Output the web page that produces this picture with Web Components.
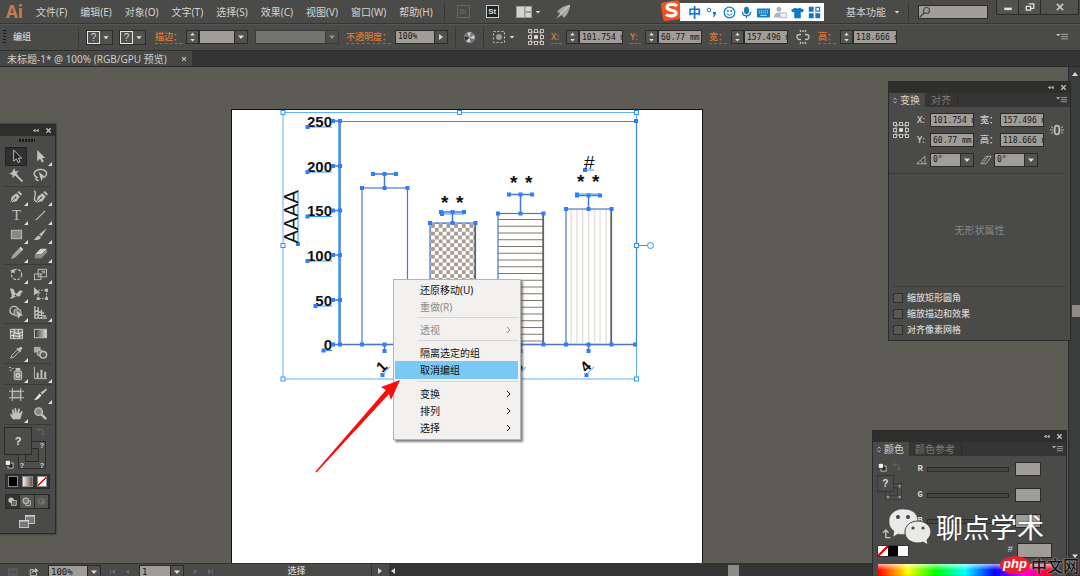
<!DOCTYPE html>
<html lang="zh-CN">
<head>
<meta charset="utf-8">
<title>未标题-1* @ 100%</title>
<style>
html,body{margin:0;height:100%}
body{overflow:hidden;font:10px/14px "Noto Sans","Noto Sans CJK SC",sans-serif;color:#d6d3ce;background:#5c5b54;
--bar:#4a4a48;--dark:#333434;--edge:#2b2b2a;--field:#a09c97;--light:#c4c1bc;--blue:#2f7dfb;--mono:"DejaVu Sans Mono","Noto Sans CJK SC",monospace}
</style>
</head>
<body>
<ai-app></ai-app>
<script>
const base=`*{box-sizing:border-box}button,input,select{font:inherit;color:inherit;margin:0;padding:0;border:0;border-radius:0;background:none;outline:0}svg{display:block}a{color:inherit;text-decoration:none}`;
const def=(tag,css,html)=>customElements.define(tag,class extends HTMLElement{
  connectedCallback(){
    if(this.shadowRoot)return;
    this.attachShadow({mode:'open'}).innerHTML=`<style>${base}${css}</style>`+(typeof html==='function'?html(this):html);
  }
});

const L='#c4c1bc';
const nib=`<path d="M1.5 14.5L3 8L8 4.5L11.5 8L8 13Z" fill="${L}"/><path d="M9 3.5L10.5 2L14 5.5L12.5 7Z" fill="${L}"/><path d="M1.5 14.5L7 9" stroke="#4a4a48"/><circle cx="7" cy="9" r="1" fill="#4a4a48"/>`;
const icons={
select:`<path d="M5 1V13L8 10.500L9.800 14.500L11.800 13.600L10 9.800H13.500Z" fill="#222" stroke="${L}"/>`,
direct:`<path d="M4.500 1V13L7.500 10.500L9.500 14.500L11.500 13.500L9.700 9.700H13Z" fill="${L}"/>`,
wand:`<path d="M7 7L14.500 14.500" stroke="${L}" stroke-width="2"/><path d="M5.500 0L6.800 3.600L10.500 3L8 5.700L10 9L6.200 8L4 11L3.700 7.200L0 6L3.500 4.600Z" fill="${L}"/>`,
lasso:`<path d="M5 10C1 9 0 5 3 3C6 1 12 1 14 4C15 6 14 8 13 9M5 10C2 10 3 14 6 13" fill="none" stroke="${L}" stroke-width="1.500"/><path d="M6 4L14 10L10.500 10.500L9 14Z" fill="${L}"/>`,
pen:nib,
curve:`<path d="M1 2C5 4 0 9 2 12C3 14 5 14 6 13" fill="none" stroke="${L}" stroke-width="1.500"/><g transform="translate(2 0)">${nib}</g>`,
type:`<text x="8" y="13" text-anchor="middle" font-family="Liberation Serif,serif" font-size="15" fill="${L}">T</text>`,
line:`<path d="M3 13L13 3" stroke="${L}" stroke-width="1.200"/>`,
rect:`<rect x="2.500" y="3.500" width="11" height="9" fill="#8b8985" stroke="${L}"/>`,
brush:`<path d="M15 1L9 10L6.500 8Z" fill="${L}"/><path d="M6 9L8.500 11C7 14 4 14 0 14C3 13 3 10 6 9Z" fill="${L}"/>`,
pencil:`<path d="M2 14L4 9.500L11 2L14 5L7 12Z" fill="#aaa7a2"/><path d="M11 2L12.500 .8L15 3.500L14 5Z" fill="#e6e3de"/>`,
eraser:`<path d="M2 9L8 3H15L9 9Z" fill="#d4d1cc"/><path d="M2 9H9V13H2ZM9 9L15 3V7L9 13Z" fill="#8d8a86"/>`,
rotate:`<circle cx="8" cy="8" r="5.500" fill="none" stroke="${L}" stroke-width="1.300" stroke-dasharray="3 1.500"/><path d="M1 4L6 2V7Z" fill="${L}"/>`,
scale:`<rect x="1.500" y="7.500" width="7" height="6" fill="none" stroke="${L}"/><rect x="5.500" y="2.500" width="9" height="8" fill="none" stroke="${L}"/><path d="M7 9L12 5M9 4.500H12.500V7" fill="none" stroke="${L}"/>`,
width:`<path d="M1 3C7 1 5 9 8 8C11 7 10 3 15 6C11 7 14 12 9 11C6 10 4 15 1 13C5 12 2 7 1 3Z" fill="${L}"/><circle cx="7" cy="10" r="1" fill="#444"/>`,
free:`<path d="M1 1V10L3.500 8L8 8Z" fill="${L}"/><rect x="5.500" y="4.500" width="9" height="9" fill="none" stroke="${L}" stroke-dasharray="2 1"/><path d="M4 12h3v3h-3zM13 12h3v3h-3zM13 3h3v3h-3z" fill="${L}"/>`,
builder:`<circle cx="5.500" cy="6" r="4.500" fill="none" stroke="${L}" stroke-width="1.500"/><circle cx="9" cy="8" r="4" fill="#777" stroke="${L}"/><path d="M8 6L15 11L11.500 12L10 15Z" fill="${L}"/>`,
persp:`<path d="M2 1V14H15M5.500 2V14M9 5V14M2 6L12 9M2 10L14 12" fill="none" stroke="${L}" stroke-width="1.500"/>`,
mesh:`<rect x="1.500" y="3.500" width="13" height="10" fill="#777" stroke="${L}"/><path d="M1 7C5 3 6 12 15 6M1 11C5 8 10 14 15 9M5 3C9 7 2 9 6 14M11 3C7 8 14 9 10 14" fill="none" stroke="#eee"/>`,
grad:`<defs><linearGradient id="g"><stop stop-color="#333"/><stop offset="1" stop-color="#ddd"/></linearGradient></defs><rect x="1.500" y="3.500" width="13" height="9" fill="url(#g)" stroke="${L}"/>`,
drop:`<path d="M2 14L3 11L9 5L11 7L5 13Z" fill="none" stroke="${L}"/><path d="M8 4L12 8L13 7L12 6L14.500 3.500L12.500 1.500L10 4L9 3Z" fill="${L}"/>`,
blend:`<rect x="1" y="2" width="7" height="6" fill="#aaa"/><rect x="4.500" y="5.500" width="6" height="6" rx="2" fill="#777" stroke="${L}"/><circle cx="11" cy="10.500" r="3.500" fill="#5b5b59" stroke="${L}" stroke-width="1.500"/>`,
spray:`<rect x="5.500" y="5.500" width="8" height="9" rx="1" fill="#888" stroke="${L}"/><path d="M7 2h5v3h-5zM0 1h2v1h-2zM3 2h2v1h-2zM1 4h2v1h-2z" fill="${L}"/><circle cx="9.500" cy="10" r="2" fill="none" stroke="#eee"/>`,
graph:`<path d="M1.500 1V13.500H15" fill="none" stroke="${L}"/><path d="M4 7h2v6h-2zM8 4h2v9h-2zM12 6h2v7h-2z" fill="${L}"/>`,
artboard:`<rect x="3.500" y="4.500" width="9" height="7" fill="#666" stroke="${L}"/><path d="M0 4.500H16M0 11.500H16M3.500 1V15M12.500 1V15" stroke="${L}"/>`,
slice:`<path d="M1 14L7 7L9 9L5 13Z" fill="#eee"/><path d="M8 6L14 1.500L15 3L10 8Z" fill="${L}"/>`,
hand:`<path d="M4 14L1 9L2 8L4 10L3 4L4.500 3.500L6 8L6 2L7.500 2L8.500 8L10 2.500L11.500 3L11 8.500L13.500 5L14.500 6L12 14Z" fill="${L}"/>`,
zoom:`<circle cx="6" cy="6" r="4" fill="#888" stroke="${L}" stroke-width="1.500"/><path d="M9 9L14 14" stroke="${L}" stroke-width="2.500"/>`,
swap:`<path d="M2 4H9Q11 4 11 6V12M5 1L2 4L5 7M8 10L11 13L14 10" fill="none" stroke="#777"/>`,
mini:`<rect x="6.500" y="6.500" width="8" height="8" fill="#222" stroke="${L}" stroke-width="1.500"/><rect x="2" y="2" width="8" height="8" fill="#eee" stroke="#222"/>`,
screens:`<rect x="6.500" y="1.500" width="9" height="8" fill="#777" stroke="${L}"/><rect x=".5" y="6.500" width="9" height="7" fill="#777" stroke="${L}"/><path d="M0 7H10M6 2H16" stroke="#ddd"/>`,
draw1:`<circle cx="6" cy="6" r="4" fill="${L}"/><rect x="6.500" y="6.500" width="7" height="7" fill="#666" stroke="#ccc"/>`,
draw2:`<rect x="7" y="7" width="7" height="7" fill="#666" stroke="#ccc"/><circle cx="7" cy="7" r="4" fill="#777" stroke="${L}" stroke-width="1.500"/>`,
draw3:`<circle cx="8" cy="8" r="4" fill="none" stroke="#777" stroke-width="1.500"/><rect x="8" y="7" width="4" height="4" fill="#777"/>`,
ref:`<path d="M3 3H13V13H3Z" fill="none" stroke="${L}"/><g stroke="${L}">${[2,8,14].map(y=>[2,8,14].map(x=>`<rect x="${x-1.5}" y="${y-1.5}" width="3" height="3" fill="${x==8&&y==8?'#eee':'#4a4a48'}"/>`).join('')).join('')}</g>`,
ball:`<circle cx="8" cy="8" r="6.500" fill="#777" stroke="#888"/><path d="M8 8L5 2L10 1.600ZM8 8L14 5V10ZM8 8L9 14L4 13Z" fill="#ccc"/><path d="M8 8L1.500 7L3 12Z" fill="#333"/>`,
similar:`<rect x="2.500" y="2.500" width="11" height="11" fill="none" stroke="${L}" stroke-dasharray="2 2"/><circle cx="8" cy="8" r="3" fill="#999"/>`,
link:`<path d="M6 5.500H4.500a2.500 2.500 0 0 0 0 5H6M10 5.500h1.500a2.500 2.500 0 0 1 0 5H10M5 1L6 3M8 1V3M11 1L10 3M5 15L6 13M8 15V13M11 15L10 13" fill="none" stroke="${L}" stroke-width="1.300"/>`,
linkv:`<rect x="5.500" y="3" width="5" height="10" rx="2.500" fill="none" stroke="${L}" stroke-width="1.800"/><path d="M0 8H4M12 8H16M1 4L4 6M15 4L12 6M1 12L4 10M15 12L12 10" stroke="${L}"/>`,
menu:`<path d="M0 4H6L3 7Z" fill="${L}"/><path d="M7 4.500H16M7 7.500H16M7 10.500H16" stroke="${L}"/>`,
ws:`<path d="M0 2H16V14H0Z" fill="#999"/><rect x="1" y="3" width="7" height="10" fill="#d6d3ce"/><path d="M9.500 3h5.500v4h-5.500zM9.500 9h5.500v4h-5.500z" fill="#d6d3ce"/>`,
rocket:`<path d="M15 1C9 1 4 5 2 8L5 9L1 15L7 11L9 14C12 11 15 6 15 1Z" fill="#aaa7a2"/><path d="M15 1L5 10" stroke="#ddd"/>`,
search:`<circle cx="10" cy="6" r="4" fill="none" stroke="#444" stroke-width="1.500"/><path d="M7 9L1 15" stroke="#444" stroke-width="2"/>`,
share:`<path d="M7 4H2V14H12V10" fill="none" stroke="${L}" stroke-width="1.500"/><path d="M4 11C4 6 7 4 10 4V1L15 6L10 10V7C7 7 6 8 4 11Z" fill="${L}"/>`,
gears:`<rect x="0" y="2" width="16" height="12" fill="#5c5c5a"/><circle cx="5" cy="8" r="2.500" fill="none" stroke="#333" stroke-width="1.500" stroke-dasharray="2 1"/><path d="M9 5l5 3M9 8l5 3" stroke="#333"/>`,
collapse:`<path d="M8 4V12L2 8ZM15 4V12L9 8Z" fill="${L}"/>`,
close:`<path d="M3 3L13 13M13 3L3 13" stroke="${L}" stroke-width="3"/>`,
min:`<path d="M2 9h12v4h-12z" fill="#e4e4e2"/>`,
restore:`<path d="M6 3h8v7h-4M2 7h7v6h-7z" fill="none" stroke="#e4e4e2" stroke-width="2"/>`,
angle:`<path d="M15 13H1L12 3V13M6 9q3 1 3 4" fill="none" stroke="${L}"/>`,
shear:`<path d="M1 13L8 3H15L8 13ZM4 13L11 3" fill="none" stroke="${L}"/>`,
updown:`<path d="M4 6L8 1L12 6M4 10L8 15L12 10" fill="none" stroke="${L}" stroke-width="2"/>`,
back:`<path d="M14 14H7V4M3 7L7 3L11 7" fill="none" stroke="${L}" stroke-width="2"/>`,
down:`<path d="M2 5H14L8 12Z" fill="#e0ddd8"/>`,up:`<path d="M2 12H14L8 4Z" fill="#e0ddd8"/>`,
left:`<path d="M12 2V14L4 8Z" fill="#d8d5d0"/>`,right:`<path d="M4 2V14L12 8Z" fill="#d8d5d0"/>`,
ldim:`<path d="M12 2V14L4 8Z" fill="#6c6c6a"/>`,rdim:`<path d="M4 2V14L12 8Z" fill="#6c6c6a"/>`,
first:`<path d="M2 2h2v12h-2zM14 2V14L5 8Z" fill="#6c6c6a"/>`,last:`<path d="M12 2h2v12h-2zM2 2V14L11 8Z" fill="#6c6c6a"/>`,
smile:`<circle cx="8" cy="8" r="6.500" fill="none" stroke="#0d7ac8" stroke-width="1.500"/><path d="M5 5h2v2h-2zM9 5h2v2h-2z" fill="#0d7ac8"/><path d="M4.500 9q3.500 4.500 7 0" fill="none" stroke="#0d7ac8" stroke-width="1.200"/>`,
mic:`<rect x="5" y="1" width="6" height="9" rx="3" fill="#0d7ac8"/><path d="M3 7q0 5 5 5t5-5M8 12V15" fill="none" stroke="#0d7ac8" stroke-width="1.500"/>`,
keys:`<rect x="0" y="3" width="16" height="11" rx="1" fill="#0d7ac8"/><path d="M2 6H14M2 8.500H14" stroke="#fff" stroke-dasharray="1.500 1"/><path d="M4 11.500H12" stroke="#fff"/>`,
person:`<circle cx="6" cy="4" r="3" fill="#aab4c0"/><path d="M0 14Q0 8 6 8T12 14Z" fill="#aab4c0"/><rect x="7.500" y="8.500" width="8" height="6" fill="#eef" stroke="#aab4c0"/>`,
shirt:`<path d="M5 2Q8 4 11 2L16 5L14 8L12 7V15H4V7L2 8L0 5Z" fill="#0d7ac8"/>`,
grid:`<path d="M1 1h6v6h-6zM9 9h6v6h-6zM1 9h6v6h-6z" fill="#0d7ac8"/><rect x="9.700" y="1.700" width="4.600" height="4.600" fill="none" stroke="#0d7ac8" stroke-width="1.400"/>`
};
def('ai-icon',`:host{display:block;flex:none;width:16px;height:16px}svg{width:100%;height:100%}`,e=>`<svg viewBox="0 0 16 16" aria-hidden="true">${icons[e.getAttribute('name')]}</svg>`);
def('ai-sep',`:host{display:block;flex:none;width:1px;height:20px;background:#383837}`,'');

/* caret-ended drop-down */
def('ai-combo',`:host{display:flex;height:14px;border:1px solid var(--edge);background:var(--field);position:relative;color:#181818;font:8px/12px var(--mono)}
select{appearance:none;flex:1;width:100%;padding:0 14px 0 2px}
ai-icon{position:absolute;right:0;top:0;width:12px;height:100%;padding:2px;background:#51514f;pointer-events:none;box-shadow:-1px 0 var(--edge)}
:host([big]){font-size:9px}`,e=>`<select aria-label="${e.getAttribute('label')}"><option>${e.getAttribute('value')||''}</option></select><ai-icon name="${e.getAttribute('arrow')||'down'}"></ai-icon>`);

/* labelled number box with optional stepper */
def('ai-field',`:host{display:flex;align-items:center;gap:4px;flex:none;font-size:9px;font-weight:500}
label{color:#e07b38;border-bottom:1px dashed #b0642f;line-height:12px;white-space:nowrap;min-width:11px}
:host([plain]){gap:2px}:host([plain]) label{color:#d6d3ce;border:0}
.box{display:flex;height:14px}
.step{display:flex;flex-direction:column;width:13px;border:1px solid var(--edge);background:#555552}
.step button{flex:1;display:flex;justify-content:center;align-items:center;height:6px}
.step ai-icon{width:7px;height:6px}
input{width:44px;height:14px;padding-left:2px;border:1px solid var(--edge);background:var(--field);color:#181818;font:8px/12px var(--mono)}
.lead{width:12px;height:12px}
ai-combo{width:49px}:host([wide]) ai-combo{width:53px}
:host([slant]) ai-combo{width:44px}`,e=>{
 const t=e.getAttribute('label'),v=e.getAttribute('value')||'',c=e.hasAttribute('combo');
 const lead=e.getAttribute('icon')?`<ai-icon class="lead" name="${e.getAttribute('icon')}"></ai-icon>`:`<label for="f">${t}</label>`;
 const step=e.hasAttribute('step')?`<span class="step"><button aria-label="+"><ai-icon name="up"></ai-icon></button><button aria-label="-"><ai-icon name="down"></ai-icon></button></span>`:'';
 return lead+`<span class="box">${step}${c?`<ai-combo label="${t}" value="${v}" ${e.getAttribute('arrow')?'arrow="right"':''}></ai-combo>`:`<input id="f" value="${v}">`}</span>`});

def('ai-question',`:host{display:block;flex:none}button{display:flex;width:27px;height:15px;border:1px solid var(--edge);background:#51514f}
span{width:13px;height:13px;border:1px solid #e4e4e2;text-align:center;font:10px/11px "Liberation Sans",sans-serif}ai-icon{width:12px;height:13px;padding:3px 2px}`,`<button><span>?</span><ai-icon name="down"></ai-icon></button>`);

def('ai-sogou',`:host{position:absolute;left:661px;top:0;display:flex;align-items:center;height:22px;color:#0d7ac8}
.bar{display:flex;align-items:center;gap:4px;height:18px;margin:2px 0 0 -3px;padding:0 3px 0 8px;background:#fff}
b{font:bold 13px/18px "Noto Sans CJK SC",sans-serif}.logo{width:22px;height:22px}ai-icon{width:13px;height:13px}`,
`<svg class="logo" viewBox="0 0 22 22"><rect x="1" y="1" width="19" height="19" rx="3" fill="#f4511e" transform="rotate(-9 11 11)"/><path d="M16 6C12 3 6 4 6 7.500C6 11 15 9.500 15 13C15 16 9 17 5 14.500" fill="none" stroke="#fff" stroke-width="3.200"/></svg>
<div class="bar"><b>中</b><svg width="14" height="14" viewBox="0 0 14 14"><circle cx="4" cy="5" r="1.800" fill="none" stroke="#0d7ac8"/><path d="M8 7h3v2l-2 3h-1l1-3h-1z" fill="#0d7ac8"/></svg>${['smile','mic','keys','person','shirt','grid'].map(n=>`<ai-icon name="${n}"></ai-icon>`).join('')}</div>`);

def('ai-menubar',`:host{display:flex;align-items:center;height:24px;flex:none;padding-left:6px;background:var(--bar);border-bottom:1px solid #353534;position:relative}
.logo{font:bold 17px/22px "Noto Sans",sans-serif;color:#c97a52;width:30px}
nav{display:flex;gap:13px;white-space:nowrap}
ai-sep{margin:0 12px 0 11px}
.apps{display:flex;gap:16px;align-items:center}.app{width:13px;height:13px;border:1px solid #666;font:8px/11px "Liberation Sans",sans-serif;text-align:center;color:#6a6a68}
.app.on{border-color:#ccc;background:#222;color:#ddd;font-weight:bold}
.ws{display:flex;align-items:center;gap:2px;margin:0 -2px 0 0}.ws ai-icon+ai-icon{width:6px;height:6px}.ws ai-icon:first-child{width:18px}
.right{margin-left:auto;display:flex;align-items:center;align-self:stretch}
.right>button{display:flex;align-items:center;gap:8px}.right>button ai-icon{width:6px;height:6px}
.find{display:flex;width:70px;height:14px;margin:0 8px 0 9px;background:var(--field);border:1px solid var(--edge)}.find input{width:56px}.find ai-icon{width:12px;height:12px}
.win{display:flex;align-self:flex-start;height:15px;margin-right:1px;border:1px solid #2b2b2a;border-top:0;border-radius:0 0 3px 3px;background:#51514f}.win button{width:22px;display:grid;place-items:center;border-right:1px solid #2b2b2a}.win button:last-child{width:37px;border:0}.win ai-icon{width:10px;height:10px}`,
`<span class="logo">Ai</span><nav>${['文件(F)','编辑(E)','对象(O)','文字(T)','选择(S)','效果(C)','视图(V)','窗口(W)','帮助(H)'].map(t=>`<a href="#">${t}</a>`).join('')}</nav><ai-sep></ai-sep>
<div class="apps"><button class="app">Br</button><button class="app on">St</button><span class="ws"><ai-icon name="ws"></ai-icon><ai-icon name="down"></ai-icon></span><ai-icon name="rocket"></ai-icon></div>
<ai-sogou></ai-sogou>
<div class="right"><button>基本功能 <ai-icon name="down"></ai-icon></button><ai-sep style="margin:0 0 0 8px"></ai-sep><label class="find"><ai-icon name="search"></ai-icon><input aria-label="搜索"></label>
<div class="win"><button aria-label="最小化"><ai-icon name="min"></ai-icon></button><button aria-label="还原"><ai-icon name="restore"></ai-icon></button><button aria-label="关闭"><ai-icon name="close"></ai-icon></button></div></div>`);

def('ai-control',`:host{display:flex;align-items:center;gap:7px;height:27px;flex:none;padding:0 12px 1px 3px;background:var(--bar);border-top:1px solid #555553;border-bottom:1px solid #2f2f2e}
.grip{width:3px;height:15px;background:repeating-linear-gradient(#1c1c1c 0 1px,#4a4a48 1px 3px)}
b{font-size:9px;width:58px;font-weight:500}
.pair{display:flex;gap:6px}.stroke{width:84px;opacity:.5}
.menu{margin-left:auto;width:12px;height:12px}.ball{width:13px;height:13px}.sim{display:flex;align-items:center;gap:2px;margin-right:6px}.sim ai-icon+ai-icon{width:6px;height:6px}`,
`<span class="grip"></span><b>编组</b><ai-sep></ai-sep><span class="pair"><ai-question></ai-question><ai-question></ai-question></span>
<ai-field label="描边：" step combo style="margin-left:2px"></ai-field><ai-combo class="stroke" label="宽度配置"></ai-combo>
<ai-field label="不透明度：" combo wide value="100%" arrow="right"></ai-field><ai-sep></ai-sep><ai-icon class="ball" name="ball"></ai-icon><ai-sep></ai-sep><span class="sim"><ai-icon name="similar"></ai-icon><ai-icon name="down"></ai-icon></span><ai-icon name="ref"></ai-icon>
<ai-field label="X:" step value="101.754 mm"></ai-field><ai-field label="Y:" step value="60.77 mm"></ai-field><ai-field label="宽：" step value="157.496 mm"></ai-field><ai-icon name="link"></ai-icon><ai-field label="高：" step value="118.666 mm"></ai-field><ai-icon class="menu" name="menu"></ai-icon>`);

def('ai-tabs',`:host{display:flex;height:16px;flex:none;background:var(--dark);border-bottom:1px solid #2a2a29}
div{display:flex;align-items:center;gap:14px;width:192px;padding-left:7px;background:#474745;white-space:nowrap;color:#cfccc7}
ai-icon{width:6px;height:6px}`,`<div><a href="#">未标题-1* @ 100% (RGB/GPU 预览)</a><button aria-label="关闭"><ai-icon name="close"></ai-icon></button></div>`);

def('ai-titlebar',`:host{display:flex;justify-content:flex-end;align-items:center;gap:6px;height:11px;padding-right:3px;background:#2e2e2d}ai-icon{width:7px;height:7px}`,`<ai-icon name="collapse"></ai-icon><ai-icon name="close"></ai-icon>`);

const groups=[['select','direct','wand','lasso'],['pen','curve','type','line','rect','brush','pencil','eraser'],['rotate','scale','width','free','builder','persp'],['mesh','grad','drop','blend'],['spray','graph'],['artboard','slice','hand','zoom']];
const plain=['select','wand','lasso','mesh','grad','blend','artboard','zoom','free'];
def('ai-fillstroke',`:host{display:block;width:42px;height:42px}svg{width:100%;height:100%}:host([small]){width:25px;height:25px}`,
e=>`<svg viewBox="0 0 42 42"><path d="M14.500 14.500H41.500V41.500H14.500Z M21.500 21.500H34.500V34.500H21.500Z" fill="#4e4e4c" fill-rule="evenodd" stroke="#2b2b2a"/><rect x=".5" y=".5" width="27" height="27" fill="#4c4c4a" stroke="#2b2b2a"/><g fill="#ddd" text-anchor="middle" font-family="Liberation Sans,sans-serif" font-weight="bold"><text x="14" y="${e.hasAttribute('small')?20:18}" font-size="${e.hasAttribute('small')?17:11}">?</text><text x="38" y="21" font-size="7">?</text><text x="18" y="41" font-size="7">?</text><text x="38" y="41" font-size="7">?</text></g></svg>`);
def('ai-tools',`:host{position:absolute;left:0;top:57px;width:56px;background:var(--bar);border:1px solid var(--edge);border-left:0;box-shadow:0 0 2px #222}
.grip{width:16px;height:3px;margin:3px auto 5px 19px;background:repeating-linear-gradient(90deg,#1c1c1c 0 2px,#4a4a48 2px 3px)}
.group{display:grid;grid-template-columns:24px 24px;grid-auto-rows:19px;margin:0 4px;border-bottom:1px solid #3a3a39;padding-bottom:1px}
button{display:grid;place-items:center;position:relative}button ai-icon{width:15px;height:15px}
button.more::after{content:"";position:absolute;right:0;bottom:0;border:2px solid;border-color:transparent #ddd #ddd transparent}
button.on{background:#303030;border:1px solid #222;margin:0 1px}
.fs{display:flex;position:relative;margin:2px 4px 5px}.fs ai-icon{position:absolute;width:10px;height:10px}.sw{right:5px;top:0}.mi{left:0;bottom:0}
.row{display:flex;margin:0 5px;height:15px;background:#343433;border:1px solid #2b2b2a}.row>*{flex:1;border-right:1px solid #2b2b2a}.row i{margin:1px 2px;border:1px solid #888}
.row ai-icon{width:11px;height:11px}.row button:nth-child(n+2){background:#555553}.scr{width:18px;height:15px;margin:5px auto 4px 18px}.scr ai-icon{width:18px;height:16px}`,
`<ai-titlebar></ai-titlebar><div class="grip"></div>${groups.map(g=>`<div class="group">${g.map(n=>`<button aria-label="${n}" class="${n=='select'?'on':plain.includes(n)?'':'more'}"><ai-icon name="${n}"></ai-icon></button>`).join('')}</div>`).join('')}
<div class="fs"><ai-fillstroke></ai-fillstroke><ai-icon class="sw" name="swap"></ai-icon><ai-icon class="mi" name="mini"></ai-icon></div>
<div class="row" style="margin-bottom:5px"><i style="background:#000"></i><i style="background:linear-gradient(90deg,#eee,#6b5648)"></i><i style="background:linear-gradient(135deg,#fff 42%,#f00 42% 58%,#fff 58%)"></i></div>
<div class="row"><button><ai-icon name="draw1"></ai-icon></button><button><ai-icon name="draw2"></ai-icon></button><button><ai-icon name="draw3"></ai-icon></button></div>
<button class="scr" aria-label="屏幕模式"><ai-icon name="screens"></ai-icon></button>`);

/* artboard drawing, in canvas coordinates */
const dot=(x,y)=>`<rect x="${x-2}" y="${y-2}" width="4" height="4"/>`;
const ticks=[['250',121,308],['200',166,308],['150',210.5,308],['100',255,308],['50',300,316],['0',344.5,324]];
const bars=[[362,188,174,'none'],[430,223,212,'url(#chk)'],[498,213.5,194.5,'url(#hor)'],[566,209,195.5,'url(#ver)']];
const handles=[[283,112.5],[459.5,112.5],[636.5,112.5],[283,245.5],[636.5,245.5],[283,379],[459.5,379],[636.5,379]];
const stars=(x,y)=>`<text x="${x} ${x+8} ${x+15}" y="${y}">* *</text>`;
def('ai-artboard',`:host{position:absolute;left:231px;top:42px;bottom:0;width:472px;overflow:hidden;background:#fff;border:1px solid #111;border-bottom:0}svg{width:470px;height:454px}text{font-family:"Liberation Sans",sans-serif;fill:#111}`,
`<svg viewBox="232 110 470 454"><defs>
<pattern id="chk" x="431" y="224" width="7.700" height="7.700" patternUnits="userSpaceOnUse"><path d="M0 0h3.850v3.850h-3.850zM3.850 3.850h3.850v3.850h-3.850z" fill="#a79d94"/></pattern>
<pattern id="hor" x="0" y="219" width="10" height="6.750" patternUnits="userSpaceOnUse"><path d="M0 .5H10" stroke="#7d7469"/></pattern>
<pattern id="ver" x="570.500" y="0" width="5.800" height="10" patternUnits="userSpaceOnUse"><path d="M.7 0V10" stroke="#dedad2" stroke-width="1.200"/></pattern></defs>
<rect x="283" y="112.500" width="353.500" height="266.500" fill="none" stroke="#62aeff"/>
<path d="M338.500 121V345" stroke="#62aeff"/><path d="M340 121V344.500H636" fill="none" stroke="#4f74b8" stroke-width="1.600"/><path d="M340 121.500H636.500V345" fill="none" stroke="#3a84f5" stroke-width="1.200"/>
${bars.map(([x,y,c,f])=>`<rect x="${x}" y="${y}" width="45.500" height="${344.5-y}" fill="${f}" stroke="#4c77c6" stroke-width="1.200"/><path d="M${x+22.5} ${y}V${c}M${x+11} ${c}H${x+34.5}M${x+22.5} 344V351" stroke="#4c77c6" stroke-width="1.500"/>`).join('')}
${ticks.map(([t,y,x])=>`<path d="M332 ${y}H341" stroke="#2f7dfb" stroke-width="1.500"/><path d="M${x} ${y+6}H332" stroke="#2f93ff"/><text x="332" y="${y+5.5}" text-anchor="end" font-size="15" font-weight="bold">${t}</text>`).join('')}
<path d="M611 209V345M543 214V345M475 223V345" stroke="#59534a" stroke-width="1.200"/>
<g fill="#2f7dfb">${ticks.map(([t,y,x])=>dot(333,y)+dot(340,y)+dot(x-.5,y+6)).join('')}
${bars.map(([x,y,c])=>[[x,y],[x+45.5,y],[x+22.5,y],[x+11,c],[x+34,c],[x+22.5,c],[x,344.5],[x+45.5,344.5],[x+22.5,344.5],[x+22.5,351],[x+20.5,375]].map(p=>dot(...p)).join('')).join('')}${dot(636,121)+dot(635,344.5)+dot(298,244)+dot(442,214)+dot(577,194.5)+dot(585,170)}</g>
<path d="M298 190V244M585 170H594M442 214H464M577 194H600" stroke="#2f93ff"/>
<text transform="translate(298 243.500) rotate(-90)" font-size="20">AAAA</text>
<g font-size="19" font-weight="bold">${stars(441,209)+stars(510,189)+stars(577,188)}</g><text x="584" y="169" font-size="19">#</text>
${bars.map(([x],i)=>`<g transform="translate(${x+21} 374) rotate(-45)"><path d="M0 0H10" stroke="#62aeff"/><text y="-1" font-size="15" font-weight="bold">${i+1}</text></g>`).join('')}
<g fill="#fff" stroke="#2f93ff">${handles.map(([x,y])=>`<rect x="${x-2}" y="${y-2}" width="4" height="4"/>`).join('')}<path d="M639 245.500H647"/><circle cx="650.500" cy="245.500" r="3"/></g></svg>`);

def('ai-item',`:host{display:block}button{display:flex;justify-content:space-between;align-items:center;width:100%;height:17px;padding:0 7px 0 25px;color:#111;white-space:nowrap}
:host([off]) button{color:#8c8c8a}:host([on]) button{background:#7ac9f5;height:18px}svg{width:5px;height:8px}`,e=>`<button role="menuitem" ${e.hasAttribute('off')?'disabled':''}><slot></slot>${e.hasAttribute('sub')?'<svg viewBox="0 0 5 8"><path d="M1 1L4 4L1 7" fill="none" stroke="currentColor"/></svg>':''}</button>`);
def('ai-context',`:host{position:absolute;left:393px;top:212px;width:128px;padding:1px 2px 3px 1px;background:#f2f1f0;border:1px solid #b6b4b0;box-shadow:2px 2px 2px #444a}hr{height:1px;margin:2px 0 3px 23px;border:0;background:#d8d6d4}`,
`<ai-item>还原移动(U)</ai-item><ai-item off>重做(R)</ai-item><hr><ai-item off sub>透视</ai-item><hr><ai-item>隔离选定的组</ai-item><ai-item on>取消编组</ai-item><hr><ai-item sub>变换</ai-item><ai-item sub>排列</ai-item><ai-item sub>选择</ai-item>`);
def('ai-pointer',`:host{position:absolute;left:314px;top:311px;pointer-events:none}`,`<svg width="90" height="96" viewBox="314 378 90 96"><path d="M315.500 471.500L386 390L381 387L400 380L391 400L389 394L316.500 472.500Z" fill="#fb0d0d"/></svg>`);

def('ai-paneltabs',`:host{display:flex;height:14px;background:#353535;color:#7e7c78}
b{display:flex;align-items:center;gap:2px;padding:0 5px 0 3px;background:var(--bar);color:#d6d3ce;font-weight:400}b ai-icon{width:6px;height:7px}
a{padding:0 6px;border-right:1px solid #2a2a2a;line-height:14px}.m{margin:1px 3px 0 auto;width:11px;height:12px}`,e=>`<b><ai-icon name="updown"></ai-icon>${e.getAttribute('a')}</b><a href="#">${e.getAttribute('b')}</a><ai-icon class="m" name="menu"></ai-icon>`);
def('ai-transform',`:host{position:absolute;right:9px;top:14px;width:183px;background:var(--bar);border:1px solid var(--edge)}
.top{display:flex;gap:4px;padding:6px 6px 6px 4px;border-bottom:1px solid #3c3c3b;margin:0 4px 0 0}
.ref{margin-top:9px}.grid{display:grid;grid-template-columns:auto auto;gap:6px;margin-left:4px}.row{display:flex;gap:6px}.grid .row{grid-column:1/3;margin-left:-1px}.lk{margin:9px 0 0 2px;width:14px}
.none{display:grid;place-items:center;height:112px;color:#8a8884}
.checks{margin:0 4px;padding:3px 0 2px;border-top:1px solid #3c3c3b;font-size:9px;font-weight:500}
label{display:flex;align-items:center;gap:4px;height:16px}input{appearance:none;width:10px;height:10px;border:1px solid #2f2f2e;background:#575755}`,
`<ai-titlebar></ai-titlebar><ai-paneltabs a="变换" b="对齐"></ai-paneltabs>
<div class="top"><ai-icon class="ref" name="ref"></ai-icon><div class="grid"><ai-field plain label="X:" value="101.754 mm"></ai-field><ai-field plain label="宽：" value="157.496 mm"></ai-field><ai-field plain label="Y:" value="60.77 mm"></ai-field><ai-field plain label="高：" value="118.666 mm"></ai-field><div class="row"><ai-field plain label="旋转" icon="angle" slant combo value="0°"></ai-field><ai-field plain label="倾斜" icon="shear" slant combo value="0°"></ai-field></div></div><ai-icon class="lk" name="linkv"></ai-icon></div>
<div class="none">无形状属性</div><div class="checks"><label><input type="checkbox">缩放矩形圆角</label><label><input type="checkbox">缩放描边和效果</label><label><input type="checkbox">对齐像素网格</label></div>`);

def('ai-color',`:host{position:absolute;right:13px;top:430px;bottom:0;width:195px;overflow:hidden;background:var(--bar);border:1px solid var(--edge);border-bottom:0}
.body{display:grid;grid-template-columns:34px 1fr;padding:6px 25px 0 4px}
.ic{display:flex;gap:5px;margin-bottom:3px}.ic ai-icon{width:10px;height:10px}.back{width:11px;height:11px;margin:28px 0 0 4px}
.rgb{display:grid;grid-template-columns:12px 1fr 26px;column-gap:4px;grid-auto-rows:14px;row-gap:12px;align-items:center;font:bold 9px/14px "Liberation Mono",monospace}.rgb label{text-align:right}
input[type=range]{appearance:none;height:5px;min-width:0;width:82px;border:1px solid #2b2b2a;background:#444442}input[type=range]::-webkit-slider-thumb{appearance:none;width:0}
input.v{width:26px;height:14px;border:1px solid var(--edge);background:var(--field)}
.hex{grid-column:1/3;display:flex;justify-content:space-between;align-items:center;margin-top:4px;font:9px/14px "Liberation Mono",monospace}.hex label{display:flex;gap:4px;margin-right:-11px}.hex input{width:35px;height:15px;border:1px solid var(--edge);background:var(--field)}
.sw{display:flex;border:1px solid #333}.sw i{width:10px;height:10px}
.spec{height:30px;margin:6px 14px 0 5px;background:linear-gradient(#fffa,#fff0 6px,#0000 10px,#000),linear-gradient(90deg,red,#ff0 17%,#0f0 33%,#0ff 50%,#00f 67%,#f0f 83%,red)}`,
`<ai-titlebar></ai-titlebar><ai-paneltabs a="颜色" b="颜色参考"></ai-paneltabs><div class="body"><div><div class="ic"><ai-icon name="mini"></ai-icon><ai-icon name="swap"></ai-icon></div><ai-fillstroke small></ai-fillstroke><ai-icon class="back" name="back"></ai-icon></div>
<div class="rgb">${['R','G','B'].map(c=>`<label for="${c}">${c}</label><input type="range" id="${c}"><input class="v" aria-label="${c} 值">`).join('')}</div>
<div class="hex"><span class="sw"><i style="background:linear-gradient(135deg,#fff 42%,#f00 42% 58%,#fff 58%)"></i><i style="background:#000"></i><i style="background:#fff"></i></span><label>#<input></label></div></div><div class="spec"></div>`);

def('ai-vscroll',`:host{position:absolute;right:0;top:0;bottom:0;width:12px;display:flex;flex-direction:column;align-items:center;justify-content:space-between;padding:3px 0;background:#3a3b3b;border-left:1px solid #2c2c2c}
ai-icon{width:8px;height:8px}i{position:absolute;right:0;top:48%;width:8px;height:12px;background:#8e8a86}`,`<ai-icon name="up"></ai-icon><i></i><ai-icon name="down"></ai-icon>`);
def('ai-watermark',`:host{position:absolute;right:36px;bottom:29px;display:flex;align-items:center;gap:5px;color:#fff;font:27px/40px "Noto Sans CJK SC",sans-serif;text-shadow:0 0 2px #333;white-space:nowrap}svg{width:43px;height:38px}`,
`<svg viewBox="0 0 43 38"><path d="M15 1C6 1 1 7 1 13C1 18 3 21 6 23L5 29L10 26Q13 27 18 26Q30 25 30 13Q29 1 15 1Z" fill="#e9e9e8" stroke="#444" stroke-width=".5"/><path d="M30 13C22 13 17 18 17 24C17 31 23 35 30 35Q33 35 35 34L40 37L39 32Q43 28 43 24C43 18 37 13 30 13Z" fill="#e9e9e8" stroke="#444"/><g fill="#444"><circle cx="10" cy="9" r="2"/><circle cx="20" cy="9" r="2"/><circle cx="25" cy="20" r="1.600"/><circle cx="35" cy="20" r="1.600"/></g></svg><span>聊点学术</span>`);
def('ai-phpmark',`:host{position:absolute;right:1px;bottom:2px;display:flex;align-items:center;gap:1px}
b{width:30px;height:18px;border-radius:50%;background:#e8222c;color:#fff;text-align:center;font:italic bold 13px/16px "Liberation Sans",sans-serif}
span{font:500 16px/18px "Noto Sans CJK SC",sans-serif;color:#111;text-shadow:0 0 1px #bbb,0 0 2px #bbb}`,`<b>php</b><span>中文网</span>`);

def('ai-status',`:host{display:flex;height:13px;flex:none;overflow:hidden;background:var(--bar);border-top:1px solid #333}
.in{display:flex;align-items:center;gap:8px;height:15px;width:372px;padding-left:6px;border-right:1px solid #333}
.in>ai-icon{width:12px;height:10px}.in>ai-icon.n{width:7px;height:7px}.z{width:53px}.p{width:45px}
b{flex:1;align-self:flex-start;text-align:center;font:500 9px/14px "Noto Sans","Noto Sans CJK SC",sans-serif}
.mid{width:17px;padding:3px 4px}.mid ai-icon{width:8px;height:8px}
.track{position:relative;flex:1;background:#343535;padding:3px 0}.track ai-icon{width:8px;height:8px}.track i{position:absolute;left:49%;top:1px;width:11px;height:13px;background:#8e8a86}`,
`<div class="in"><ai-icon name="gears" style="width:14px"></ai-icon><ai-icon name="share"></ai-icon><ai-combo big class="z" label="缩放" value="100%"></ai-combo><ai-icon class="n" name="first"></ai-icon><ai-icon class="n" name="ldim"></ai-icon><ai-combo big class="p" label="画板" value="1"></ai-combo><ai-icon class="n" name="rdim"></ai-icon><ai-icon class="n" name="last"></ai-icon><b>选择</b></div><div class="mid"><ai-icon name="right"></ai-icon></div><div class="track"><ai-icon name="left"></ai-icon><i></i></div>`);

def('ai-canvas',`:host{display:block;position:relative;flex:1;min-height:0}`,`<ai-artboard></ai-artboard><ai-vscroll></ai-vscroll><ai-tools></ai-tools><ai-context></ai-context><ai-pointer></ai-pointer><ai-transform></ai-transform>`);
def('ai-app',`:host{display:flex;flex-direction:column;height:100vh;position:relative;overflow:hidden}`,`<ai-menubar></ai-menubar><ai-control></ai-control><ai-tabs></ai-tabs><ai-canvas></ai-canvas><ai-status></ai-status><ai-color></ai-color><ai-watermark></ai-watermark><ai-phpmark></ai-phpmark>`);
</script>
</body>
</html>
